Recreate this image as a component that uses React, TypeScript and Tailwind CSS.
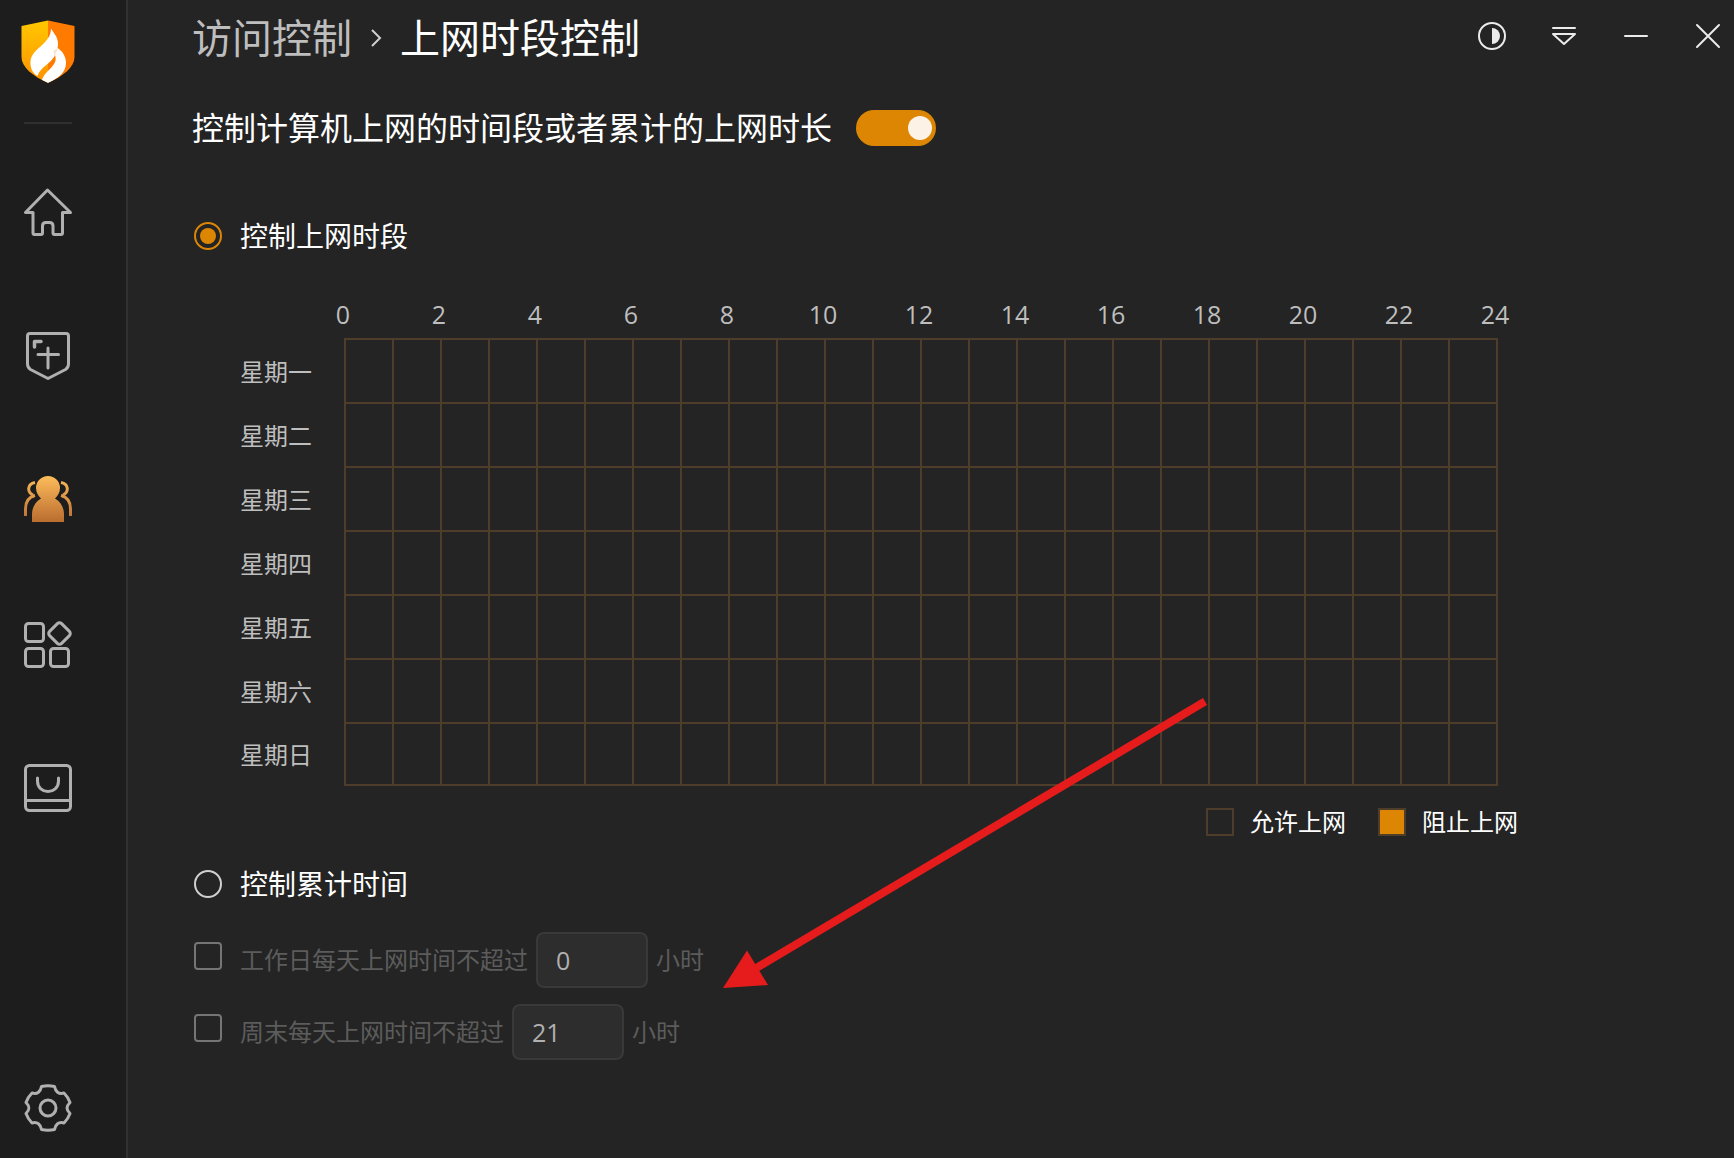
import { useState } from "react";
import type { ReactNode } from "react";

const hours = [0, 2, 4, 6, 8, 10, 12, 14, 16, 18, 20, 22, 24];
const days = ["星期一", "星期二", "星期三", "星期四", "星期五", "星期六", "星期日"];
const slots = Array.from({ length: 24 }, (_, i) => i);

function Logo() {
  return (
    <svg viewBox="0 0 54 63" className="h-[63px] w-[54px]" aria-hidden="true">
      <defs>
        <linearGradient id="gold" x1="0" y1="0" x2="0" y2="1">
          <stop offset="0" stopColor="#ffc800" />
          <stop offset="1" stopColor="#ff9000" />
        </linearGradient>
        <clipPath id="shield">
          <path d="M27 .5 53.5 6v31c0 10-11 19-26.500 26C11.500 56 .5 47 .5 37V6z" />
        </clipPath>
      </defs>
      <g clipPath="url(#shield)">
        <path d="M0 0h27v63H0z" fill="url(#gold)" />
        <path d="M27 0h27v63H27z" fill="#ff7b00" />
        <path
          d="M30 8.500c2 4 7 8 7 15.500 0 2-.2 3-.5 4 5 3 8.500 8.500 8.500 15C45 53 36 59 27 63l-6-3c2-7 9-11 12-16 2-3 2-6 1-9-4 9-14 11-17.500 21C11 53 9 47 9.500 41 11 28 30 24 30 8.500z"
          fill="#fff"
        />
        <path d="M36.500 28c-.5 3-1.500 5-3.500 9 .3-3-.2-5-1-6z" fill="#ffe3cc" />
      </g>
    </svg>
  );
}

function SideIcon({ children }: { children: ReactNode }) {
  return (
    <svg
      viewBox="0 0 48 48"
      className="size-12"
      fill="none"
      stroke="#b0b0b0"
      strokeWidth="3"
      strokeLinejoin="round"
      strokeLinecap="round"
      aria-hidden="true"
    >
      {children}
    </svg>
  );
}

function NavButton({ label, children }: { label: string; children: ReactNode }) {
  return (
    <button type="button" aria-label={label} className="block">
      <SideIcon>{children}</SideIcon>
    </button>
  );
}

function Sidebar() {
  return (
    <nav className="flex w-32 shrink-0 flex-col items-start border-r-2 border-[#313131] bg-[#1d1d1d] pt-5 pb-[26px]">
      <div className="flex w-[95px] grow flex-col items-center">
        <Logo />
        <hr className="mt-[39px] w-12 border-t-2 border-[#303030]" />
        <div className="mt-16 flex flex-col gap-24">
          <NavButton label="首页">
            <path d="M23.500 2 1.500 24.500H9V45q0 1.500 1.500 1.500H17q1.500 0 1.500-1.500V38q0-3.500 3.500-3.500h3.500Q29 34.500 29 38v7q0 1.500 1.500 1.500H37q1.500 0 1.500-1.500V24.500h8z" />
          </NavButton>
          <NavButton label="病毒查杀">
            <path d="M6 1.500h36q2.500 0 2.500 2.500v28q0 3.500-3 5.500L24 46.500 6.500 37.500q-3-2-3-5.500V4q0-2.500 2.500-2.500z" />
            <path d="M24 16v20M14 22.500h20.500" />
            <path d="M10.500 15V9.500H17" strokeWidth="3.500" />
          </NavButton>
          <button type="button" aria-label="访问控制" aria-current="page" className="block">
            <svg viewBox="0 1 48 48" className="size-12" aria-hidden="true">
              <defs>
                <linearGradient id="amber" gradientUnits="userSpaceOnUse" x1="0" y1="0" x2="0" y2="48">
                  <stop offset="0" stopColor="#ffbe5c" />
                  <stop offset="1" stopColor="#b86b2e" />
                </linearGradient>
              </defs>
              <path
                fill="url(#amber)"
                d="M24 1a12 12 0 0 1 12 12c0 4-2 8-5 10.500C37 27 40 33 40 39v8H8v-8c0-6 3-12 9-15.500C14 21 12 17 12 13A12 12 0 0 1 24 1z"
              />
              <g fill="none" stroke="url(#amber)" strokeWidth="3">
                <path d="M11 7.500C3 9 3 17 9 20M11 20.500C5 22 1.500 27 1.500 34v7" />
                <path d="M37 7.500c8 1.500 8 9.500 2 12.500M37 20.500c6 1.500 9.500 6.500 9.500 13.500v7" />
              </g>
            </svg>
          </button>
          <NavButton label="安全工具">
            <rect x="1.500" y="3.500" width="18" height="18" rx="3" />
            <rect x="1.500" y="28.500" width="18" height="18" rx="3" />
            <rect x="26.500" y="28.500" width="18" height="18" rx="3" />
            <rect x="27" y="5" width="17" height="17" rx="3" transform="rotate(45 35.500 13.500)" />
          </NavButton>
          <NavButton label="应用商店">
            <rect x="1.500" y="1.500" width="45" height="45" rx="4" />
            <path d="M2 36.500h44M13.500 14v3c0 14 21 14 21 0v-3" />
          </NavButton>
        </div>
        <button type="button" aria-label="设置" className="mt-auto block">
          <SideIcon>
            <circle cx="24" cy="24" r="8" />
            <path d="M17.500 2.500q6.500-1.500 13 0c1 5 4 8 9.500 6.500q4 4 6 9.500c-4 4-4 7 0 11q-2 5.500-6 9.500c-5.500-1.500-8.500 1.500-9.500 6.500q-6.500 1.500-13 0c-1-5-4-8-9.500-6.500q-4-4-6-9.500c4-4 4-7 0-11q2-5.500 6-9.500c5.500 1.500 8.500-1.500 9.500-6.500z" />
          </SideIcon>
        </button>
      </div>
    </nav>
  );
}

function WindowButton({ label, children }: { label: string; children: ReactNode }) {
  return (
    <button type="button" aria-label={label} className="block">
      <svg
        viewBox="0 0 28 28"
        className="size-7"
        fill="none"
        stroke="#ebebeb"
        strokeWidth="2"
        strokeLinecap="round"
        strokeLinejoin="round"
        aria-hidden="true"
      >
        {children}
      </svg>
    </button>
  );
}

function Header() {
  return (
    <header className="flex items-start justify-between pr-3">
      <h1 className="flex h-[76px] items-center text-[40px] leading-[60px] text-white">
        <a href="#access" className="text-[#bebebe]">
          访问控制
        </a>
        <svg viewBox="0 0 12 18" className="mx-[18px] h-[18px] w-3" fill="none" stroke="#d0d0d0" strokeWidth="2" aria-hidden="true">
          <path d="M2 1l8 8-8 8" />
        </svg>
        <span>上网时段控制</span>
      </h1>
      <div className="flex gap-11 pt-[22px]">
        <WindowButton label="切换主题">
          <circle cx="14" cy="14" r="13" />
          <path d="M14 6a8 8 0 0 1 0 16z" fill="#ebebeb" stroke="none" />
        </WindowButton>
        <WindowButton label="菜单">
          <path d="M3 6h22M3 12h22L14 22z" />
        </WindowButton>
        <WindowButton label="最小化">
          <path d="M3 14h22" />
        </WindowButton>
        <WindowButton label="关闭">
          <path d="M3 3l22 22M25 3 3 25" />
        </WindowButton>
      </div>
    </header>
  );
}

const radioClass =
  "size-7 shrink-0 appearance-none rounded-full border-2 border-[#d0d0d0] p-1 before:block before:size-4 before:rounded-full checked:border-[#dc8604] checked:before:bg-[#dc8604]";

function Schedule() {
  const [blocked, setBlocked] = useState<Record<string, boolean>>({});
  return (
    <table className="w-full max-w-[1305px] table-fixed border-collapse text-2xl text-[#bebebe]">
      <colgroup>
        <col className="w-[57px]" />
        {Array.from({ length: 26 }, (_, i) => (
          <col key={i} />
        ))}
      </colgroup>
      <thead>
        <tr>
          <td />
          {hours.map((h) => (
            <th key={h} scope="col" colSpan={2} className="h-12 pr-1 text-center text-[25px] leading-[48px] font-normal">
              {h}
            </th>
          ))}
        </tr>
      </thead>
      <tbody>
        {days.map((day) => (
          <tr key={day} className="group">
            <th scope="row" colSpan={2} className="pt-0.5 text-left font-normal">
              {day}
            </th>
            {slots.map((s) => {
              const key = `${day}${s}`;
              return (
                <td key={s} className="border-2 border-[#4f3d2b] p-0">
                  <button
                    type="button"
                    aria-label={`${day} ${s}:00`}
                    aria-pressed={!!blocked[key]}
                    onClick={() => setBlocked({ ...blocked, [key]: !blocked[key] })}
                    className="block h-[62px] w-full group-last:h-[60px] aria-pressed:bg-[#dc8604]"
                  />
                </td>
              );
            })}
            <td />
          </tr>
        ))}
      </tbody>
    </table>
  );
}

function Limit({ id, label, value }: { id: string; label: string; value: string }) {
  return (
    <div className="flex h-14 items-center text-2xl text-[#5c5c5c]">
      <input
        id={id}
        type="checkbox"
        className="mr-[18px] mb-2 size-7 shrink-0 appearance-none rounded-sm border-2 border-[#757575] checked:bg-[#dc8604]"
      />
      <label htmlFor={id} className="mr-2">
        {label}
      </label>
      <input
        type="text"
        aria-label={label}
        defaultValue={value}
        className="mr-2 h-14 w-28 rounded-lg border-2 border-[#393939] bg-[#2d2d2d] px-[18px] text-[25px] text-[#b0b0b0]"
      />
      <span>小时</span>
    </div>
  );
}

export default function App() {
  const [on, setOn] = useState(true);
  const [mode, setMode] = useState("period");
  return (
    <div className="relative flex min-h-screen bg-[#242424] font-['Open_Sans','Noto_Sans_CJK_SC',sans-serif] text-white">
      <Sidebar />
      <main className="min-w-0 grow pl-16">
        <Header />
        <div className="mt-7 flex items-center gap-6">
          <span id="master" className="text-[32px] leading-[48px]">
            控制计算机上网的时间段或者累计的上网时长
          </span>
          <button
            type="button"
            role="switch"
            aria-checked={on}
            aria-labelledby="master"
            onClick={() => setOn(!on)}
            className="flex h-9 w-20 items-center rounded-full bg-[#555555] px-1 aria-checked:justify-end aria-checked:bg-[#dc8604]"
          >
            <span className="size-6 rounded-full bg-[#fdf2e6]" />
          </button>
        </div>

        <div className="mt-16 flex h-10 items-center gap-[18px] pl-0.5 text-[28px]">
          <input
            id="period"
            type="radio"
            name="mode"
            checked={mode === "period"}
            onChange={() => setMode("period")}
            className={radioClass}
          />
          <label htmlFor="period">控制上网时段</label>
        </div>

        <div className="mt-[34px] pl-12">
          <Schedule />
          <div className="mt-2 flex h-14 max-w-[1278px] items-center justify-end gap-8 text-2xl">
            <div className="flex items-center gap-4">
              <span className="size-7 border-2 border-[#4f3d2b]" />
              <span>允许上网</span>
            </div>
            <div className="flex items-center gap-4">
              <span className="size-7 border-2 border-[#4f3d2b] bg-[#dc8604]" />
              <span>阻止上网</span>
            </div>
          </div>
        </div>

        <div className="mt-[14px] flex h-10 items-center gap-[18px] pl-0.5 text-[28px]">
          <input
            id="total"
            type="radio"
            name="mode"
            checked={mode === "total"}
            onChange={() => setMode("total")}
            className={radioClass}
          />
          <label htmlFor="total">控制累计时间</label>
        </div>

        <div className="mt-7 flex flex-col gap-4 pl-0.5">
          <Limit id="workday" label="工作日每天上网时间不超过" value="0" />
          <Limit id="weekend" label="周末每天上网时间不超过" value="21" />
        </div>
      </main>

      <svg
        viewBox="0 0 484 292"
        className="pointer-events-none absolute top-[697px] left-[723px] h-[292px] w-[484px]"
        aria-hidden="true"
      >
        <path d="M482 4.500 30 273" stroke="#e61c1c" strokeWidth="8" fill="none" />
        <path d="M0 291 24 253.500 45 288z" fill="#e61c1c" />
      </svg>
    </div>
  );
}
